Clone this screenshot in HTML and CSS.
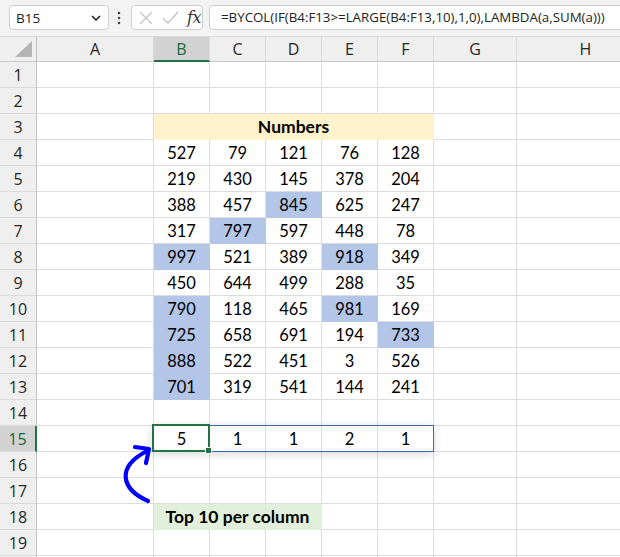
FILE: index.html
```html
<!DOCTYPE html>
<html>
<head>
<meta charset="utf-8">
<link rel="stylesheet" href="styles.css">
</head>
<body>
<div class="app">
  <div class="fbar">
    <div class="namebox">
      <span class="nb-text">B15</span>
      <svg class="chev" width="10" height="6" viewBox="0 0 10 6"><path d="M1 1 L5 5 L9 1" fill="none" stroke="#222" stroke-width="1.6"/></svg>
    </div>
    <svg class="dots" width="4" height="14" viewBox="0 0 4 14"><circle cx="2" cy="2" r="1.3" fill="#444"/><circle cx="2" cy="7" r="1.3" fill="#444"/><circle cx="2" cy="12" r="1.3" fill="#444"/></svg>
    <div class="fxbox">
      <svg width="14" height="14" viewBox="0 0 14 14"><path d="M1 1 L13 13 M13 1 L1 13" stroke="#c4c4c4" stroke-width="1.3" fill="none"/></svg>
      <svg width="17" height="13" viewBox="0 0 17 13"><path d="M1 7 L6 12 L16 1" stroke="#c4c4c4" stroke-width="1.3" fill="none"/></svg>
      <span class="fx">fx</span>
    </div>
    <div class="formula">=BYCOL(IF(B4:F13&gt;=LARGE(B4:F13,10),1,0),LAMBDA(a,SUM(a)))</div>
  </div>

  <div class="sheet">
    <div class="corner"><svg width="18" height="16" viewBox="0 0 18 16"><path d="M17 0 L17 16 L0 16 Z" fill="#b5b5b5"/></svg></div>
    <div class="ch">A</div><div class="ch sel">B</div><div class="ch">C</div><div class="ch">D</div><div class="ch">E</div><div class="ch">F</div><div class="ch">G</div><div class="ch">H</div>

    <div class="rh">1</div><div class="c"></div><div class="c"></div><div class="c"></div><div class="c"></div><div class="c"></div><div class="c"></div><div class="c"></div><div class="c"></div>
    <div class="rh">2</div><div class="c"></div><div class="c"></div><div class="c"></div><div class="c"></div><div class="c"></div><div class="c"></div><div class="c"></div><div class="c"></div>
    <div class="rh">3</div><div class="c"></div><div class="c title">Numbers</div><div class="c"></div><div class="c"></div>
    <div class="rh">4</div><div class="c"></div><div class="c">527</div><div class="c">79</div><div class="c">121</div><div class="c">76</div><div class="c">128</div><div class="c"></div><div class="c"></div>
    <div class="rh">5</div><div class="c"></div><div class="c">219</div><div class="c">430</div><div class="c">145</div><div class="c">378</div><div class="c">204</div><div class="c"></div><div class="c"></div>
    <div class="rh">6</div><div class="c"></div><div class="c">388</div><div class="c">457</div><div class="c hi">845</div><div class="c">625</div><div class="c">247</div><div class="c"></div><div class="c"></div>
    <div class="rh">7</div><div class="c"></div><div class="c">317</div><div class="c hi">797</div><div class="c">597</div><div class="c">448</div><div class="c">78</div><div class="c"></div><div class="c"></div>
    <div class="rh">8</div><div class="c"></div><div class="c hi">997</div><div class="c">521</div><div class="c">389</div><div class="c hi">918</div><div class="c">349</div><div class="c"></div><div class="c"></div>
    <div class="rh">9</div><div class="c"></div><div class="c">450</div><div class="c">644</div><div class="c">499</div><div class="c">288</div><div class="c">35</div><div class="c"></div><div class="c"></div>
    <div class="rh">10</div><div class="c"></div><div class="c hi">790</div><div class="c">118</div><div class="c">465</div><div class="c hi">981</div><div class="c">169</div><div class="c"></div><div class="c"></div>
    <div class="rh">11</div><div class="c"></div><div class="c hi">725</div><div class="c">658</div><div class="c">691</div><div class="c">194</div><div class="c hi">733</div><div class="c"></div><div class="c"></div>
    <div class="rh">12</div><div class="c"></div><div class="c hi">888</div><div class="c">522</div><div class="c">451</div><div class="c">3</div><div class="c">526</div><div class="c"></div><div class="c"></div>
    <div class="rh">13</div><div class="c"></div><div class="c hi">701</div><div class="c">319</div><div class="c">541</div><div class="c">144</div><div class="c">241</div><div class="c"></div><div class="c"></div>
    <div class="rh">14</div><div class="c"></div><div class="c"></div><div class="c"></div><div class="c"></div><div class="c"></div><div class="c"></div><div class="c"></div><div class="c"></div>
    <div class="rh sel">15</div><div class="c"></div><div class="c">5</div><div class="c">1</div><div class="c">1</div><div class="c">2</div><div class="c">1</div><div class="c"></div><div class="c"></div>
    <div class="rh">16</div><div class="c"></div><div class="c"></div><div class="c"></div><div class="c"></div><div class="c"></div><div class="c"></div><div class="c"></div><div class="c"></div>
    <div class="rh">17</div><div class="c"></div><div class="c"></div><div class="c"></div><div class="c"></div><div class="c"></div><div class="c"></div><div class="c"></div><div class="c"></div>
    <div class="rh">18</div><div class="c"></div><div class="c label">Top 10 per column</div><div class="c"></div><div class="c"></div><div class="c"></div><div class="c"></div>
    <div class="rh">19</div><div class="c"></div><div class="c"></div><div class="c"></div><div class="c"></div><div class="c"></div><div class="c"></div><div class="c"></div><div class="c"></div>
    <div class="rh"></div><div class="c"></div><div class="c"></div><div class="c"></div><div class="c"></div><div class="c"></div><div class="c"></div><div class="c"></div><div class="c"></div>

    <div class="sel-range"></div>
    <div class="sel-cell"><div class="handle"></div></div>
    <svg class="arrow" width="60" height="80" viewBox="0 0 60 80">
      <path d="M48 64 C21 52 16 30 47 14" fill="none" stroke="#0000ff" stroke-width="4.2" stroke-linecap="round"/>
      <path d="M35 10 L49 12 L46 26" fill="none" stroke="#0000ff" stroke-width="4.2" stroke-linecap="round" stroke-linejoin="round"/>
    </svg>
  </div>
</div>
</body>
</html>
```

FILE: styles.css
```css
html, body {
  margin: 0;
  padding: 0;
  background: #ffffff;
  overflow: hidden;
}
.app {
  width: 620px;
  height: 557px;
  overflow: hidden;
  position: relative;
}
.fbar {
  height: 37px;
  box-sizing: border-box;
  background: #f3f3f3;
  display: flex;
  align-items: flex-start;
  padding: 5px 0 0 9px;
  font-family: "Open Sans", "Noto Sans", sans-serif;
}
.fbar > * {
  flex: none;
}
.namebox {
  width: 100px;
  height: 25px;
  box-sizing: border-box;
  background: #fff;
  border: 1px solid #cdcdcd;
  border-radius: 4px;
  display: flex;
  align-items: center;
  justify-content: space-between;
  padding: 0 7px 0 6px;
  font-size: 13.5px;
  color: #222;
}
.dots {
  margin: 6px 0 0 8px;
}
.fxbox {
  margin-left: 10px;
  width: 72px;
  height: 25px;
  box-sizing: border-box;
  background: #fff;
  border: 1px solid #cdcdcd;
  border-radius: 4px;
  display: flex;
  align-items: center;
  padding: 0 0 0 7px;
  gap: 9px;
}
.fx {
  font-family: "DejaVu Serif", "Liberation Serif", serif;
  font-style: italic;
  font-size: 16px;
  color: #333;
  margin-left: -1px;
  letter-spacing: -0.5px;
}
.formula {
  margin-left: 6px;
  width: 430px;
  height: 25px;
  box-sizing: border-box;
  background: #fff;
  border: 1px solid #cdcdcd;
  border-radius: 4px;
  padding: 0 0 0 11px;
  line-height: 23px;
  font-size: 13.3px;
  color: #222;
  white-space: nowrap;
  overflow: hidden;
}
.sheet {
  position: relative;
  display: grid;
  grid-template-columns: 37px 117px 56px 56px 56px 56px 56px 83px 138px;
  grid-template-rows: 25px;
  grid-auto-rows: 26px;
  width: 662px;
  font-family: Lato, "Open Sans", sans-serif;
  border-top: 1px solid #d9d9d9;
  margin-top: -1px;
}
.corner, .ch, .rh {
  background: #efefef;
  box-sizing: border-box;
  border-right: 1px solid #d0d0d0;
  border-bottom: 1px solid #c8c8c8;
  color: #262626;
  font-family: "Open Sans", "Noto Sans", sans-serif;
}
.corner {
  display: flex;
  align-items: flex-end;
  justify-content: flex-end;
  padding: 0 3px 4px 0;
  border-right: 1px solid #c0c0c0;
}
.ch {
  display: flex;
  align-items: center;
  justify-content: center;
  font-size: 16px;
  border-right-color: #dadada;
}
.ch.sel {
  background: #d2d2d2;
  color: #176a3a;
  border-bottom: 2px solid #217346;
}
.rh {
  display: flex;
  align-items: center;
  justify-content: center;
  font-size: 16px;
  border-right-color: #c0c0c0;
  border-bottom-color: #dadada;
}
.rh.sel {
  background: #d2d2d2;
  color: #176a3a;
  border-right: 2px solid #217346;
}
.c {
  box-sizing: border-box;
  border-right: 1px solid #dcdcdc;
  border-bottom: 1px solid #dcdcdc;
  display: flex;
  align-items: center;
  justify-content: center;
  font-size: 16.5px;
  color: #000;
  white-space: nowrap;
}
.c.hi {
  background: #b4c6e7;
  border-color: #b4c6e7;
}
.c.title {
  grid-column: span 5;
  background: #fff2cc;
  border-color: #fff2cc;
  font-weight: 700;
  font-size: 17.5px;
}
.c.label {
  grid-column: span 3;
  background: #e2efda;
  border-color: #e2efda;
  font-weight: 700;
  font-size: 17.5px;
}
.sel-range {
  position: absolute;
  left: 152px;
  top: 388px;
  width: 282px;
  height: 27px;
  box-sizing: border-box;
  border: 1px solid #3b66b8;
  box-shadow: 0 2px 10px rgba(0, 0, 0, 0.16);
}
.sel-cell {
  position: absolute;
  left: 152px;
  top: 387px;
  width: 58px;
  height: 28px;
  box-sizing: border-box;
  border: 2px solid #217346;
}
.handle {
  position: absolute;
  right: -4px;
  bottom: -4px;
  width: 5px;
  height: 5px;
  background: #217346;
  border: 1px solid #fff;
}
.arrow {
  position: absolute;
  left: 100px;
  top: 400px;
}
```
